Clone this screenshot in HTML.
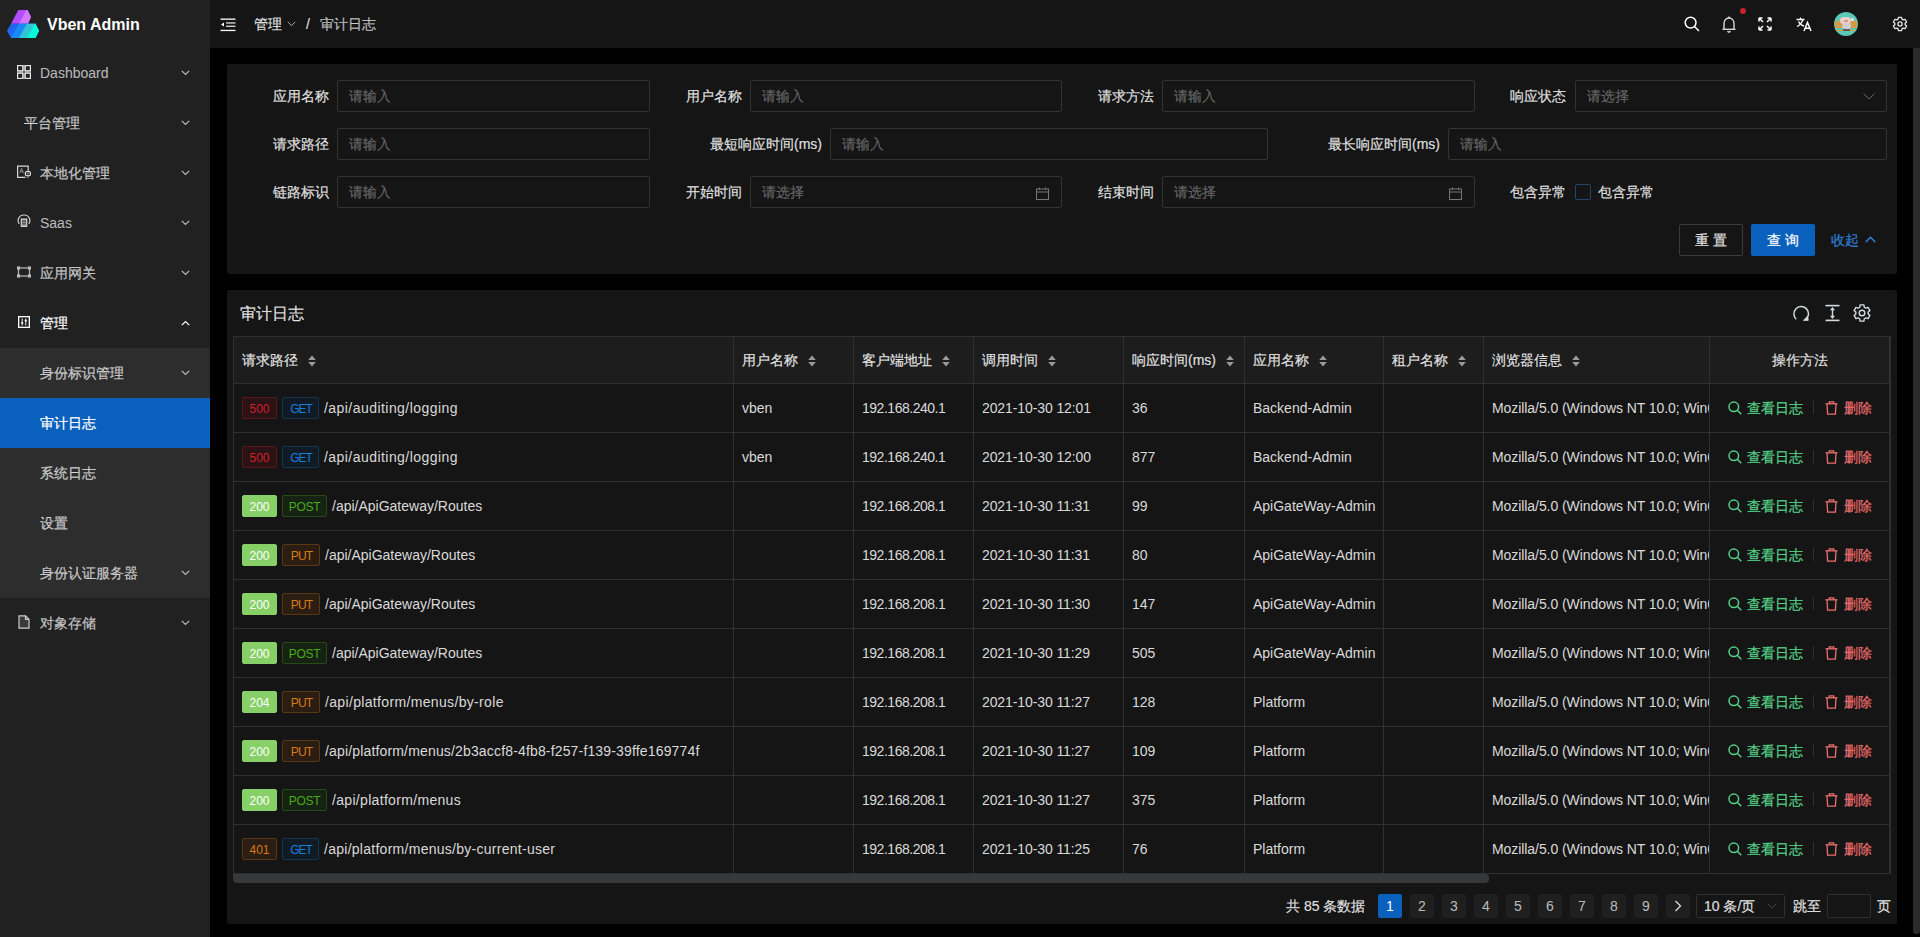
<!DOCTYPE html>
<html><head><meta charset="utf-8">
<style>
*{box-sizing:border-box;margin:0;padding:0}
html,body{width:1920px;height:937px;overflow:hidden;background:#000;font-family:"Liberation Sans",sans-serif;font-size:14px;color:rgba(255,255,255,.85)}
.a{position:absolute}
svg{display:block}
/* sidebar */
#side{left:0;top:0;width:210px;height:937px;background:#212121}
.mi{position:absolute;left:0;width:210px;height:50px;line-height:50px;color:rgba(255,255,255,.7);white-space:nowrap}
.mi .ic{position:absolute;left:17px;top:17px;width:14px;height:14px}
.mi .tx{position:absolute;left:40px;top:0}
.mi .chev{position:absolute;left:181px;top:22px}
#sub{left:0;top:348px;width:210px;height:250px;background:#2d2d2d}
/* header */
#hdr{left:210px;top:0;width:1710px;height:48px;background:#151515}
/* cards */
.card{background:#151515;border-radius:2px}
.lbl{position:absolute;white-space:nowrap;color:rgba(255,255,255,.85);line-height:32px;text-align:right}
.inp{position:absolute;height:32px;border:1px solid #333;border-radius:2px;background:#151515}
.ph{position:absolute;left:11px;top:0;line-height:30px;color:rgba(255,255,255,.3)}
.th{line-height:46px;white-space:nowrap;color:rgba(255,255,255,.85)}
.td{line-height:48px;white-space:nowrap;color:rgba(255,255,255,.85)}
.tag{height:22px;line-height:21px;padding-top:1px;font-size:12px;text-align:center;border:1px solid;border-radius:2px}
.tr{color:#d32029;background:#2a1215;border-color:#58181c}
.tg{color:#fff;background:#87d068;border-color:#87d068}
.to{letter-spacing:-0.8px;text-indent:1px;color:#d87a16;background:#2b1d11;border-color:#593815}
.tb{letter-spacing:-1px;text-indent:1px;color:#177ddc;background:#111b26;border-color:#153450}
.tp{letter-spacing:-0.3px;color:#49aa19;background:#162312;border-color:#274916}
.pg{width:24px;height:24px;line-height:24px;text-align:center;background:#1f1f1f;border-radius:2px;color:rgba(255,255,255,.7)}
.tos{letter-spacing:0;text-indent:0}
body *{-webkit-text-stroke:0.2px}
.nl,.nl *{-webkit-text-stroke:0}
</style></head><body>

<!-- SIDEBAR -->
<div id="side" class="a">
  <svg class="a" style="left:7px;top:9px" width="33" height="30" viewBox="7 9 33 30">
    <defs>
      <linearGradient id="gp" x1="0" y1="0" x2="1" y2="0"></linearGradient>
    </defs>
    <polygon points="18.3,10 27.5,10 31,16.9 28,23.8 11,23.8" fill="#b44cff"/>
    <polygon points="26.3,10 27.5,10 31,16.9 28,23.8 19,23.8" fill="#d577ff"/>
    <polygon points="11,23.8 35.4,23.8 39,30.8 35.4,38 11,38 7,30.8" fill="#2067f0"/>
    <polygon points="19,23.8 35.4,23.8 39,30.8 35.4,38 11,38 15,30.8" fill="#1a8bf5"/>
    <polygon points="27,23.8 35.4,23.8 39,30.8 35.4,38 19,38 23,30.8" fill="#32c4d2"/>
    <polygon points="35,23.8 35.4,23.8 39,30.8 35.4,38 27,38 31,30.8" fill="#00fcd8"/>
  </svg>
  <div class="a" style="left:47px;top:1px;line-height:48px;font-size:16px;font-weight:bold;color:#fff;-webkit-text-stroke:0">Vben Admin</div>

  <div id="sub" class="a"></div>

  <div class="mi" style="top:48px">
    <svg class="ic" viewBox="0 0 14 14" fill="none"><rect x="5.8" y="0" width="2.4" height="14" fill="#8a8a8a"/><rect x="0" y="5.8" width="14" height="2.4" fill="#8a8a8a"/><g stroke="#e6e6e6" stroke-width="1.2"><rect x="0.6" y="0.6" width="5.2" height="5.2"/><rect x="8.2" y="0.6" width="5.2" height="5.2"/><rect x="0.6" y="8.2" width="5.2" height="5.2"/><rect x="8.2" y="8.2" width="5.2" height="5.2"/></g><circle cx="7" cy="7" r="0.7" fill="#222"/></svg>
    <span class="tx nl">Dashboard</span>
    <svg class="chev" width="9" height="6" viewBox="0 0 9 6"><path d="M0.8 0.8 L4.5 4.5 L8.2 0.8" fill="none" stroke="#bbb" stroke-width="1.2"/></svg>
  </div>
  <div class="mi" style="top:98px">
    <span class="tx" style="left:24px">平台管理</span>
    <svg class="chev" width="9" height="6" viewBox="0 0 9 6"><path d="M0.8 0.8 L4.5 4.5 L8.2 0.8" fill="none" stroke="#bbb" stroke-width="1.2"/></svg>
  </div>
  <div class="mi" style="top:148px">
    <svg class="ic" viewBox="0 0 14 14" fill="none" stroke="#d6d6d6" stroke-width="1.2"><path d="M8.5 12.4H0.6V1.2H11.2V6"/><path d="M2.8 8.2L4.6 3.2L6.4 8.2M3.5 6.6H5.7" stroke="#8f8f8f" stroke-width="1"/><rect x="8.4" y="6.6" width="5" height="4" rx="1"/><path d="M10.9 10.6V13" stroke="#999"/><rect x="9.6" y="7.8" width="2.6" height="1.6" fill="#777" stroke="none"/></svg>
    <span class="tx">本地化管理</span>
    <svg class="chev" width="9" height="6" viewBox="0 0 9 6"><path d="M0.8 0.8 L4.5 4.5 L8.2 0.8" fill="none" stroke="#bbb" stroke-width="1.2"/></svg>
  </div>
  <div class="mi" style="top:198px">
    <svg class="ic" style="top:16px;height:13px" viewBox="0 0 14 13" fill="none" stroke="#cfcfcf" stroke-width="1.2"><path d="M2.2 9.8C0.2 7.5 0.8 1 7 1S13.8 7.5 11.8 9.8"/><rect x="4.2" y="5" width="5.6" height="7.4" fill="#9a9a9a" stroke="#e0e0e0" stroke-width="1"/><rect x="5.2" y="6.2" width="1.4" height="1.6" fill="#333" stroke="none"/><rect x="7.4" y="6.2" width="1.4" height="1.6" fill="#333" stroke="none"/><rect x="5.2" y="8.8" width="1.4" height="1.6" fill="#333" stroke="none"/><rect x="7.4" y="8.8" width="1.4" height="1.6" fill="#333" stroke="none"/></svg>
    <span class="tx nl">Saas</span>
    <svg class="chev" width="9" height="6" viewBox="0 0 9 6"><path d="M0.8 0.8 L4.5 4.5 L8.2 0.8" fill="none" stroke="#bbb" stroke-width="1.2"/></svg>
  </div>
  <div class="mi" style="top:248px">
    <svg class="ic" viewBox="0 0 14 14" fill="none" stroke="#bbb" stroke-width="1.2"><rect x="1.5" y="3" width="11" height="8"/><rect x="0.5" y="2" width="2" height="2" fill="#555"/><rect x="11.5" y="2" width="2" height="2" fill="#555"/><rect x="0.5" y="10" width="2" height="2" fill="#555"/><rect x="11.5" y="10" width="2" height="2" fill="#555"/></svg>
    <span class="tx">应用网关</span>
    <svg class="chev" width="9" height="6" viewBox="0 0 9 6"><path d="M0.8 0.8 L4.5 4.5 L8.2 0.8" fill="none" stroke="#bbb" stroke-width="1.2"/></svg>
  </div>
  <div class="mi" style="top:298px;color:#fff">
    <svg class="ic" style="left:18px;top:18px;width:12px;height:12px" viewBox="0 0 12 12" fill="none" stroke="#fff" stroke-width="1.3"><rect x="0.65" y="0.65" width="10.7" height="10.7"/><path d="M4.2 2.5V9.5M7.8 2.5V9.5" stroke-width="0.9"/><path d="M4.2 6L5.2 7L4.2 8L3.2 7Z" fill="#fff" stroke-width="0.6"/><path d="M7.8 3.8L8.8 4.8L7.8 5.8L6.8 4.8Z" fill="#fff" stroke-width="0.6"/></svg>
    <span class="tx">管理</span>
    <svg class="chev" width="9" height="6" viewBox="0 0 9 6"><path d="M0.8 5.2 L4.5 1.5 L8.2 5.2" fill="none" stroke="#fff" stroke-width="1.2"/></svg>
  </div>
  <div class="mi" style="top:348px">
    <span class="tx">身份标识管理</span>
    <svg class="chev" width="9" height="6" viewBox="0 0 9 6"><path d="M0.8 0.8 L4.5 4.5 L8.2 0.8" fill="none" stroke="#bbb" stroke-width="1.2"/></svg>
  </div>
  <div class="mi" style="top:398px;background:#0960bd;color:#fff">
    <span class="tx">审计日志</span>
  </div>
  <div class="mi" style="top:448px"><span class="tx">系统日志</span></div>
  <div class="mi" style="top:498px"><span class="tx">设置</span></div>
  <div class="mi" style="top:548px">
    <span class="tx">身份认证服务器</span>
    <svg class="chev" width="9" height="6" viewBox="0 0 9 6"><path d="M0.8 0.8 L4.5 4.5 L8.2 0.8" fill="none" stroke="#bbb" stroke-width="1.2"/></svg>
  </div>
  <div class="mi" style="top:598px">
    <svg class="ic" viewBox="0 0 14 14" fill="none" stroke="#ccc" stroke-width="1.2"><path d="M2 0.8H8.5L12 4.3V13.2H2Z" fill="#3a3a3a"/><path d="M8.5 0.8V4.3H12" /></svg>
    <span class="tx">对象存储</span>
    <svg class="chev" width="9" height="6" viewBox="0 0 9 6"><path d="M0.8 0.8 L4.5 4.5 L8.2 0.8" fill="none" stroke="#bbb" stroke-width="1.2"/></svg>
  </div>
</div>

<!-- HEADER -->
<div id="hdr" class="a">
  <svg class="a" style="left:10px;top:18px" width="16" height="14" viewBox="0 0 16 14">
    <rect x="0.5" y="0.5" width="15" height="1.3" fill="#fff"/>
    <rect x="6" y="4.3" width="9.5" height="1.3" fill="#ddd"/>
    <rect x="6" y="7.6" width="9.5" height="1.3" fill="#ddd"/>
    <path d="M1 6.5L4 4.5V8.5Z" fill="#fff"/>
    <rect x="0.5" y="11.8" width="15" height="1.3" fill="#fff"/>
  </svg>
  <div class="a" style="left:44px;top:0;line-height:48px;color:rgba(255,255,255,.85)">管理</div>
  <svg class="a" style="left:77px;top:21px" width="9" height="6" viewBox="0 0 9 6"><path d="M0.8 0.8 L4.5 4.8 L8.2 0.8" fill="none" stroke="#aaa" stroke-width="1"/></svg>
  <div class="a" style="left:96px;top:0;line-height:48px;color:rgba(255,255,255,.85)">/</div>
  <div class="a" style="left:110px;top:0;line-height:48px;color:rgba(255,255,255,.65)">审计日志</div>

  <!-- search -->
  <svg class="a" style="left:1474px;top:16px" width="16" height="16" viewBox="0 0 16 16" fill="none" stroke="#fff" stroke-width="1.5"><circle cx="6.6" cy="6.6" r="5.4"/><path d="M10.5 10.5L15 15"/></svg>
  <!-- bell -->
  <svg class="a" style="left:1512px;top:16px" width="14" height="17" viewBox="0 0 14 17" fill="none" stroke="#e6e6e6" stroke-width="1.3"><path d="M2 13V7.5C2 4.5 4 2 7 2S12 4.5 12 7.5V13"/><path d="M0.5 13.3H13.5"/><path d="M7 0.5V2"/><path d="M5.5 15.2Q7 16.8 8.5 15.2"/></svg>
  <div class="a" style="left:1530px;top:8px;width:6px;height:6px;border-radius:3px;background:#c8222a"></div>
  <!-- fullscreen -->
  <svg class="a" style="left:1548px;top:17px" width="14" height="14" viewBox="0 0 14 14" fill="none" stroke="#fff" stroke-width="1.5"><path d="M1 1L5 5M1 1V4.5M1 1H4.5"/><path d="M13 1L9 5M13 1V4.5M13 1H9.5"/><path d="M1 13L5 9M1 13V9.5M1 13H4.5"/><path d="M13 13L9 9M13 13V9.5M13 13H9.5"/></svg>
  <!-- translate -->
  <svg class="a" style="left:1586px;top:17px" width="16" height="15" viewBox="0 0 16 15" fill="none" stroke="#fff" stroke-width="1.3"><path d="M0.5 2.5H8.5M4.5 0.5V2.5M7 2.5Q5 8 1 9.5M2.5 4.5Q4 8 8 9"/><path d="M8 14L11.5 5.5L15 14M9.2 11.3H13.8" stroke-width="1.5"/></svg>
  <!-- avatar -->
  <div class="a" style="left:1624px;top:12px;width:24px;height:24px;border-radius:12px;background:#5ac8b6;overflow:hidden">
    <div class="a" style="left:1px;top:9px;width:22px;height:7px;background:#d49a48"></div>
    <div class="a" style="left:1px;top:18px;width:22px;height:1px;background:#e0a040"></div>
    <div class="a" style="left:6px;top:5px;width:11px;height:7px;border-radius:5px;background:#e9cfc6"></div>
    <div class="a" style="left:10px;top:8px;width:4px;height:2px;border-radius:2px;background:#d98a8a"></div>
    <div class="a" style="left:8px;top:11px;width:9px;height:6px;border-radius:3px;background:#cfcfcf"></div>
    <div class="a" style="left:9px;top:17px;width:7px;height:2px;background:#6a5a4a"></div>
    <div class="a" style="left:17px;top:6px;width:3px;height:3px;border-radius:2px;background:#e8e8e8"></div>
  </div>
  <!-- settings -->
  <svg class="a" style="left:1682px;top:16px" width="16" height="16" viewBox="0 0 16 16" fill="none" stroke="#e6e6e6" stroke-width="1.3" stroke-linejoin="round"><path d="M6.05 3.18L6.45 1.28L9.55 1.28L9.95 3.18L11.20 3.90L13.05 3.29L14.60 5.98L13.15 7.28L13.15 8.72L14.60 10.02L13.05 12.71L11.20 12.10L9.95 12.82L9.55 14.72L6.45 14.72L6.05 12.82L4.80 12.10L2.95 12.71L1.40 10.02L2.85 8.72L2.85 7.28L1.40 5.98L2.95 3.29L4.80 3.90Z"/><circle cx="8" cy="8" r="2.1"/></svg>
</div>

<!-- page scrollbar -->
<div class="a" style="left:1913px;top:48px;width:7px;height:886px;background:#2b2b2b;border-radius:0 0 4px 4px"></div>

<!-- FORM CARD -->
<div id="form" class="a card" style="left:227px;top:64px;width:1670px;height:210px">
<div class="lbl" style="right:1568px;top:16px">应用名称</div>
<div class="inp" style="left:110px;top:16px;width:313px"><span class="ph">请输入</span></div>
<div class="lbl" style="right:1155px;top:16px">用户名称</div>
<div class="inp" style="left:523px;top:16px;width:312px"><span class="ph">请输入</span></div>
<div class="lbl" style="right:743px;top:16px">请求方法</div>
<div class="inp" style="left:935px;top:16px;width:313px"><span class="ph">请输入</span></div>
<div class="lbl" style="right:331px;top:16px">响应状态</div>
<div class="inp" style="left:1348px;top:16px;width:312px"><span class="ph">请选择</span><svg class="a" style="right:11px;top:12px" width="12" height="7" viewBox="0 0 12 7" fill="none" stroke="#666" stroke-width="1"><path d="M0.5 0.5L6 6L11.5 0.5"/></svg></div>
<div class="lbl" style="right:1568px;top:64px">请求路径</div>
<div class="inp" style="left:110px;top:64px;width:313px"><span class="ph">请输入</span></div>
<div class="lbl" style="right:1075px;top:64px">最短响应时间(ms)</div>
<div class="inp" style="left:603px;top:64px;width:438px"><span class="ph">请输入</span></div>
<div class="lbl" style="right:457px;top:64px">最长响应时间(ms)</div>
<div class="inp" style="left:1221px;top:64px;width:439px"><span class="ph">请输入</span></div>
<div class="lbl" style="right:1568px;top:112px">链路标识</div>
<div class="inp" style="left:110px;top:112px;width:313px"><span class="ph">请输入</span></div>
<div class="lbl" style="right:1155px;top:112px">开始时间</div>
<div class="inp" style="left:523px;top:112px;width:312px"><span class="ph">请选择</span><svg class="a" style="right:12px;top:10px" width="13" height="13" viewBox="0 0 13 13" fill="none" stroke="#777" stroke-width="1"><rect x="0.5" y="2" width="12" height="10.5"/><path d="M0.5 5H12.5M3.5 0.5V3M9.5 0.5V3"/></svg></div>
<div class="lbl" style="right:743px;top:112px">结束时间</div>
<div class="inp" style="left:935px;top:112px;width:313px"><span class="ph">请选择</span><svg class="a" style="right:12px;top:10px" width="13" height="13" viewBox="0 0 13 13" fill="none" stroke="#777" stroke-width="1"><rect x="0.5" y="2" width="12" height="10.5"/><path d="M0.5 5H12.5M3.5 0.5V3M9.5 0.5V3"/></svg></div>
<div class="lbl" style="right:331px;top:112px">包含异常</div>
<div class="a" style="left:1348px;top:120px;width:16px;height:16px;border:1px solid #24456b;border-radius:2px"></div>
<div class="a" style="left:1371px;top:112px;line-height:32px;white-space:nowrap">包含异常</div>
<div class="a" style="left:1452px;top:160px;width:64px;height:32px;border:1px solid #3a3a3a;border-radius:2px;text-align:center;line-height:30px;letter-spacing:4px;text-indent:4px">重置</div>
<div class="a" style="left:1524px;top:160px;width:64px;height:32px;background:#0960bd;border-radius:2px;text-align:center;line-height:32px;color:#fff;letter-spacing:4px;text-indent:4px">查询</div>
<div class="a" style="left:1604px;top:160px;line-height:32px;color:#0960bd;white-space:nowrap;color:#2f80d8">收起</div>
<svg class="a" style="left:1638px;top:172px" width="11" height="7" viewBox="0 0 11 7" fill="none" stroke="#2f80d8" stroke-width="1.5"><path d="M0.8 6L5.5 1.2L10.2 6"/></svg>
</div>

<!-- TABLE CARD -->
<div id="tbl" class="a card" style="left:227px;top:290px;width:1670px;height:634px">
<div class="a" style="left:13px;top:12px;line-height:24px;font-size:16px;color:rgba(255,255,255,.85);white-space:nowrap">审计日志</div>
<svg class="a" style="left:1565px;top:14px" width="18" height="18" viewBox="0 0 18 18" fill="none" stroke="#d6d9de" stroke-width="1.5"><path d="M4.2 15.2A7.3 7.3 0 1 1 14.8 14.6"/><path d="M11.3 16.3H16.2L15.4 11.8" fill="#d6d9de" stroke-width="1"/></svg>
<svg class="a" style="left:1598px;top:14px" width="15" height="18" viewBox="0 0 15 18" fill="#d6d9de"><rect x="0.5" y="0.8" width="14" height="1.6"/><rect x="0.5" y="15.6" width="14" height="1.6"/><rect x="6.8" y="4.5" width="1.4" height="9"/><path d="M7.5 3L10 6.3H5Z"/><path d="M7.5 15L10 11.7H5Z"/></svg>
<svg class="a" style="left:1626px;top:13px" width="18" height="20" viewBox="0 0 18 20" fill="none" stroke="#d6d9de" stroke-width="1.4" stroke-linejoin="round"><path d="M6.68 4.25L7.13 1.91L10.87 1.91L11.32 4.25L12.82 5.11L15.07 4.34L16.94 7.57L15.14 9.14L15.14 10.86L16.94 12.43L15.07 15.66L12.82 14.89L11.32 15.75L10.87 18.09L7.13 18.09L6.68 15.75L5.18 14.89L2.93 15.66L1.06 12.43L2.86 10.86L2.86 9.14L1.06 7.57L2.93 4.34L5.18 5.11Z"/><circle cx="9" cy="10" r="2.8"/></svg>
<div class="a" style="left:6px;top:46px;width:1658px;height:538px;border-top:1px solid #303030;border-left:1px solid #303030;border-right:2px solid #303030"></div>
<div class="a" style="left:7px;top:47px;width:1655px;height:46px;background:#1d1d1d"></div>
<div class="a" style="left:7px;top:93px;width:1655px;height:1px;background:#303030"></div>
<div class="a" style="left:7px;top:142px;width:1655px;height:1px;background:#303030"></div>
<div class="a" style="left:7px;top:191px;width:1655px;height:1px;background:#303030"></div>
<div class="a" style="left:7px;top:240px;width:1655px;height:1px;background:#303030"></div>
<div class="a" style="left:7px;top:289px;width:1655px;height:1px;background:#303030"></div>
<div class="a" style="left:7px;top:338px;width:1655px;height:1px;background:#303030"></div>
<div class="a" style="left:7px;top:387px;width:1655px;height:1px;background:#303030"></div>
<div class="a" style="left:7px;top:436px;width:1655px;height:1px;background:#303030"></div>
<div class="a" style="left:7px;top:485px;width:1655px;height:1px;background:#303030"></div>
<div class="a" style="left:7px;top:534px;width:1655px;height:1px;background:#303030"></div>
<div class="a" style="left:7px;top:583px;width:1655px;height:1px;background:#303030"></div>
<div class="a" style="left:506px;top:47px;width:1px;height:536px;background:#303030"></div>
<div class="a" style="left:626px;top:47px;width:1px;height:536px;background:#303030"></div>
<div class="a" style="left:746px;top:47px;width:1px;height:536px;background:#303030"></div>
<div class="a" style="left:896px;top:47px;width:1px;height:536px;background:#303030"></div>
<div class="a" style="left:1017px;top:47px;width:1px;height:536px;background:#303030"></div>
<div class="a" style="left:1156px;top:47px;width:1px;height:536px;background:#303030"></div>
<div class="a" style="left:1256px;top:47px;width:1px;height:536px;background:#303030"></div>
<div class="a" style="left:1482px;top:47px;width:1px;height:536px;background:#303030"></div>
<div class="a" style="left:6px;top:584px;width:1256px;height:9px;background:#37383a;border-radius:0 4px 4px 4px"></div>
<div class="a th" style="left:15px;top:47px">请求路径</div>
<svg class="a" style="left:81px;top:65px" width="8" height="12" viewBox="0 0 8 12" fill="#9a9a9a"><path d="M4 0.5L7.8 5H0.2Z"/><path d="M4 11.5L7.8 7H0.2Z"/></svg>
<div class="a th" style="left:515px;top:47px">用户名称</div>
<svg class="a" style="left:581px;top:65px" width="8" height="12" viewBox="0 0 8 12" fill="#9a9a9a"><path d="M4 0.5L7.8 5H0.2Z"/><path d="M4 11.5L7.8 7H0.2Z"/></svg>
<div class="a th" style="left:635px;top:47px">客户端地址</div>
<svg class="a" style="left:715px;top:65px" width="8" height="12" viewBox="0 0 8 12" fill="#9a9a9a"><path d="M4 0.5L7.8 5H0.2Z"/><path d="M4 11.5L7.8 7H0.2Z"/></svg>
<div class="a th" style="left:755px;top:47px">调用时间</div>
<svg class="a" style="left:821px;top:65px" width="8" height="12" viewBox="0 0 8 12" fill="#9a9a9a"><path d="M4 0.5L7.8 5H0.2Z"/><path d="M4 11.5L7.8 7H0.2Z"/></svg>
<div class="a th" style="left:905px;top:47px">响应时间(ms)</div>
<svg class="a" style="left:999px;top:65px" width="8" height="12" viewBox="0 0 8 12" fill="#9a9a9a"><path d="M4 0.5L7.8 5H0.2Z"/><path d="M4 11.5L7.8 7H0.2Z"/></svg>
<div class="a th" style="left:1026px;top:47px">应用名称</div>
<svg class="a" style="left:1092px;top:65px" width="8" height="12" viewBox="0 0 8 12" fill="#9a9a9a"><path d="M4 0.5L7.8 5H0.2Z"/><path d="M4 11.5L7.8 7H0.2Z"/></svg>
<div class="a th" style="left:1165px;top:47px">租户名称</div>
<svg class="a" style="left:1231px;top:65px" width="8" height="12" viewBox="0 0 8 12" fill="#9a9a9a"><path d="M4 0.5L7.8 5H0.2Z"/><path d="M4 11.5L7.8 7H0.2Z"/></svg>
<div class="a th" style="left:1265px;top:47px">浏览器信息</div>
<svg class="a" style="left:1345px;top:65px" width="8" height="12" viewBox="0 0 8 12" fill="#9a9a9a"><path d="M4 0.5L7.8 5H0.2Z"/><path d="M4 11.5L7.8 7H0.2Z"/></svg>
<div class="a th" style="left:1483px;top:47px;width:180px;text-align:center">操作方法</div>
<div class="a nl tag tr" style="left:15px;top:107px;width:35px">500</div>
<div class="a nl tag tb" style="left:55px;top:107px;width:37px">GET</div>
<div class="a td nl" style="left:97px;top:94px;letter-spacing:0.45px">/api/auditing/logging</div>
<div class="a td nl" style="left:515px;top:94px">vben</div>
<div class="a td nl" style="left:635px;top:94px;letter-spacing:-0.48px">192.168.240.1</div>
<div class="a td nl" style="left:755px;top:94px;letter-spacing:-0.1px">2021-10-30 12:01</div>
<div class="a td nl" style="left:905px;top:94px">36</div>
<div class="a td nl" style="left:1026px;top:94px">Backend-Admin</div>
<div class="a td nl" style="left:1265px;top:94px;width:217px;overflow:hidden;letter-spacing:-0.07px">Mozilla/5.0 (Windows NT 10.0; Win64; x64)</div>
<svg class="a" style="left:1501px;top:111px" width="14" height="14" viewBox="0 0 14 14" fill="none" stroke="#55d187" stroke-width="1.5"><circle cx="5.8" cy="5.8" r="4.8"/><path d="M9.3 9.3L13.3 13.3"/></svg>
<div class="a td" style="left:1520px;top:94px;color:#55d187">查看日志</div>
<div class="a" style="left:1586px;top:111px;width:1px;height:13px;background:#303030"></div>
<svg class="a" style="left:1598px;top:111px" width="13" height="14" viewBox="0 0 13 14" fill="none" stroke="#ed6f6f" stroke-width="1.3"><path d="M0.5 2.8H12.5"/><path d="M4.3 2.8V0.9H8.7V2.8"/><path d="M2 2.8L2.6 13.2H10.4L11 2.8"/></svg>
<div class="a td" style="left:1617px;top:94px;color:#ed6f6f">删除</div>
<div class="a nl tag tr" style="left:15px;top:156px;width:35px">500</div>
<div class="a nl tag tb" style="left:55px;top:156px;width:37px">GET</div>
<div class="a td nl" style="left:97px;top:143px;letter-spacing:0.45px">/api/auditing/logging</div>
<div class="a td nl" style="left:515px;top:143px">vben</div>
<div class="a td nl" style="left:635px;top:143px;letter-spacing:-0.48px">192.168.240.1</div>
<div class="a td nl" style="left:755px;top:143px;letter-spacing:-0.1px">2021-10-30 12:00</div>
<div class="a td nl" style="left:905px;top:143px">877</div>
<div class="a td nl" style="left:1026px;top:143px">Backend-Admin</div>
<div class="a td nl" style="left:1265px;top:143px;width:217px;overflow:hidden;letter-spacing:-0.07px">Mozilla/5.0 (Windows NT 10.0; Win64; x64)</div>
<svg class="a" style="left:1501px;top:160px" width="14" height="14" viewBox="0 0 14 14" fill="none" stroke="#55d187" stroke-width="1.5"><circle cx="5.8" cy="5.8" r="4.8"/><path d="M9.3 9.3L13.3 13.3"/></svg>
<div class="a td" style="left:1520px;top:143px;color:#55d187">查看日志</div>
<div class="a" style="left:1586px;top:160px;width:1px;height:13px;background:#303030"></div>
<svg class="a" style="left:1598px;top:160px" width="13" height="14" viewBox="0 0 13 14" fill="none" stroke="#ed6f6f" stroke-width="1.3"><path d="M0.5 2.8H12.5"/><path d="M4.3 2.8V0.9H8.7V2.8"/><path d="M2 2.8L2.6 13.2H10.4L11 2.8"/></svg>
<div class="a td" style="left:1617px;top:143px;color:#ed6f6f">删除</div>
<div class="a nl tag tg" style="left:15px;top:205px;width:35px">200</div>
<div class="a nl tag tp" style="left:55px;top:205px;width:45px">POST</div>
<div class="a td nl" style="left:105px;top:192px">/api/ApiGateway/Routes</div>
<div class="a td nl" style="left:635px;top:192px;letter-spacing:-0.48px">192.168.208.1</div>
<div class="a td nl" style="left:755px;top:192px;letter-spacing:-0.1px">2021-10-30 11:31</div>
<div class="a td nl" style="left:905px;top:192px">99</div>
<div class="a td nl" style="left:1026px;top:192px">ApiGateWay-Admin</div>
<div class="a td nl" style="left:1265px;top:192px;width:217px;overflow:hidden;letter-spacing:-0.07px">Mozilla/5.0 (Windows NT 10.0; Win64; x64)</div>
<svg class="a" style="left:1501px;top:209px" width="14" height="14" viewBox="0 0 14 14" fill="none" stroke="#55d187" stroke-width="1.5"><circle cx="5.8" cy="5.8" r="4.8"/><path d="M9.3 9.3L13.3 13.3"/></svg>
<div class="a td" style="left:1520px;top:192px;color:#55d187">查看日志</div>
<div class="a" style="left:1586px;top:209px;width:1px;height:13px;background:#303030"></div>
<svg class="a" style="left:1598px;top:209px" width="13" height="14" viewBox="0 0 13 14" fill="none" stroke="#ed6f6f" stroke-width="1.3"><path d="M0.5 2.8H12.5"/><path d="M4.3 2.8V0.9H8.7V2.8"/><path d="M2 2.8L2.6 13.2H10.4L11 2.8"/></svg>
<div class="a td" style="left:1617px;top:192px;color:#ed6f6f">删除</div>
<div class="a nl tag tg" style="left:15px;top:254px;width:35px">200</div>
<div class="a nl tag to" style="left:55px;top:254px;width:38px">PUT</div>
<div class="a td nl" style="left:98px;top:241px">/api/ApiGateway/Routes</div>
<div class="a td nl" style="left:635px;top:241px;letter-spacing:-0.48px">192.168.208.1</div>
<div class="a td nl" style="left:755px;top:241px;letter-spacing:-0.1px">2021-10-30 11:31</div>
<div class="a td nl" style="left:905px;top:241px">80</div>
<div class="a td nl" style="left:1026px;top:241px">ApiGateWay-Admin</div>
<div class="a td nl" style="left:1265px;top:241px;width:217px;overflow:hidden;letter-spacing:-0.07px">Mozilla/5.0 (Windows NT 10.0; Win64; x64)</div>
<svg class="a" style="left:1501px;top:258px" width="14" height="14" viewBox="0 0 14 14" fill="none" stroke="#55d187" stroke-width="1.5"><circle cx="5.8" cy="5.8" r="4.8"/><path d="M9.3 9.3L13.3 13.3"/></svg>
<div class="a td" style="left:1520px;top:241px;color:#55d187">查看日志</div>
<div class="a" style="left:1586px;top:258px;width:1px;height:13px;background:#303030"></div>
<svg class="a" style="left:1598px;top:258px" width="13" height="14" viewBox="0 0 13 14" fill="none" stroke="#ed6f6f" stroke-width="1.3"><path d="M0.5 2.8H12.5"/><path d="M4.3 2.8V0.9H8.7V2.8"/><path d="M2 2.8L2.6 13.2H10.4L11 2.8"/></svg>
<div class="a td" style="left:1617px;top:241px;color:#ed6f6f">删除</div>
<div class="a nl tag tg" style="left:15px;top:303px;width:35px">200</div>
<div class="a nl tag to" style="left:55px;top:303px;width:38px">PUT</div>
<div class="a td nl" style="left:98px;top:290px">/api/ApiGateway/Routes</div>
<div class="a td nl" style="left:635px;top:290px;letter-spacing:-0.48px">192.168.208.1</div>
<div class="a td nl" style="left:755px;top:290px;letter-spacing:-0.1px">2021-10-30 11:30</div>
<div class="a td nl" style="left:905px;top:290px">147</div>
<div class="a td nl" style="left:1026px;top:290px">ApiGateWay-Admin</div>
<div class="a td nl" style="left:1265px;top:290px;width:217px;overflow:hidden;letter-spacing:-0.07px">Mozilla/5.0 (Windows NT 10.0; Win64; x64)</div>
<svg class="a" style="left:1501px;top:307px" width="14" height="14" viewBox="0 0 14 14" fill="none" stroke="#55d187" stroke-width="1.5"><circle cx="5.8" cy="5.8" r="4.8"/><path d="M9.3 9.3L13.3 13.3"/></svg>
<div class="a td" style="left:1520px;top:290px;color:#55d187">查看日志</div>
<div class="a" style="left:1586px;top:307px;width:1px;height:13px;background:#303030"></div>
<svg class="a" style="left:1598px;top:307px" width="13" height="14" viewBox="0 0 13 14" fill="none" stroke="#ed6f6f" stroke-width="1.3"><path d="M0.5 2.8H12.5"/><path d="M4.3 2.8V0.9H8.7V2.8"/><path d="M2 2.8L2.6 13.2H10.4L11 2.8"/></svg>
<div class="a td" style="left:1617px;top:290px;color:#ed6f6f">删除</div>
<div class="a nl tag tg" style="left:15px;top:352px;width:35px">200</div>
<div class="a nl tag tp" style="left:55px;top:352px;width:45px">POST</div>
<div class="a td nl" style="left:105px;top:339px">/api/ApiGateway/Routes</div>
<div class="a td nl" style="left:635px;top:339px;letter-spacing:-0.48px">192.168.208.1</div>
<div class="a td nl" style="left:755px;top:339px;letter-spacing:-0.1px">2021-10-30 11:29</div>
<div class="a td nl" style="left:905px;top:339px">505</div>
<div class="a td nl" style="left:1026px;top:339px">ApiGateWay-Admin</div>
<div class="a td nl" style="left:1265px;top:339px;width:217px;overflow:hidden;letter-spacing:-0.07px">Mozilla/5.0 (Windows NT 10.0; Win64; x64)</div>
<svg class="a" style="left:1501px;top:356px" width="14" height="14" viewBox="0 0 14 14" fill="none" stroke="#55d187" stroke-width="1.5"><circle cx="5.8" cy="5.8" r="4.8"/><path d="M9.3 9.3L13.3 13.3"/></svg>
<div class="a td" style="left:1520px;top:339px;color:#55d187">查看日志</div>
<div class="a" style="left:1586px;top:356px;width:1px;height:13px;background:#303030"></div>
<svg class="a" style="left:1598px;top:356px" width="13" height="14" viewBox="0 0 13 14" fill="none" stroke="#ed6f6f" stroke-width="1.3"><path d="M0.5 2.8H12.5"/><path d="M4.3 2.8V0.9H8.7V2.8"/><path d="M2 2.8L2.6 13.2H10.4L11 2.8"/></svg>
<div class="a td" style="left:1617px;top:339px;color:#ed6f6f">删除</div>
<div class="a nl tag tg" style="left:15px;top:401px;width:35px">204</div>
<div class="a nl tag to" style="left:55px;top:401px;width:38px">PUT</div>
<div class="a td nl" style="left:98px;top:388px;letter-spacing:0.34px">/api/platform/menus/by-role</div>
<div class="a td nl" style="left:635px;top:388px;letter-spacing:-0.48px">192.168.208.1</div>
<div class="a td nl" style="left:755px;top:388px;letter-spacing:-0.1px">2021-10-30 11:27</div>
<div class="a td nl" style="left:905px;top:388px">128</div>
<div class="a td nl" style="left:1026px;top:388px">Platform</div>
<div class="a td nl" style="left:1265px;top:388px;width:217px;overflow:hidden;letter-spacing:-0.07px">Mozilla/5.0 (Windows NT 10.0; Win64; x64)</div>
<svg class="a" style="left:1501px;top:405px" width="14" height="14" viewBox="0 0 14 14" fill="none" stroke="#55d187" stroke-width="1.5"><circle cx="5.8" cy="5.8" r="4.8"/><path d="M9.3 9.3L13.3 13.3"/></svg>
<div class="a td" style="left:1520px;top:388px;color:#55d187">查看日志</div>
<div class="a" style="left:1586px;top:405px;width:1px;height:13px;background:#303030"></div>
<svg class="a" style="left:1598px;top:405px" width="13" height="14" viewBox="0 0 13 14" fill="none" stroke="#ed6f6f" stroke-width="1.3"><path d="M0.5 2.8H12.5"/><path d="M4.3 2.8V0.9H8.7V2.8"/><path d="M2 2.8L2.6 13.2H10.4L11 2.8"/></svg>
<div class="a td" style="left:1617px;top:388px;color:#ed6f6f">删除</div>
<div class="a nl tag tg" style="left:15px;top:450px;width:35px">200</div>
<div class="a nl tag to" style="left:55px;top:450px;width:38px">PUT</div>
<div class="a td nl" style="left:98px;top:437px;letter-spacing:0.16px">/api/platform/menus/2b3accf8-4fb8-f257-f139-39ffe169774f</div>
<div class="a td nl" style="left:635px;top:437px;letter-spacing:-0.48px">192.168.208.1</div>
<div class="a td nl" style="left:755px;top:437px;letter-spacing:-0.1px">2021-10-30 11:27</div>
<div class="a td nl" style="left:905px;top:437px">109</div>
<div class="a td nl" style="left:1026px;top:437px">Platform</div>
<div class="a td nl" style="left:1265px;top:437px;width:217px;overflow:hidden;letter-spacing:-0.07px">Mozilla/5.0 (Windows NT 10.0; Win64; x64)</div>
<svg class="a" style="left:1501px;top:454px" width="14" height="14" viewBox="0 0 14 14" fill="none" stroke="#55d187" stroke-width="1.5"><circle cx="5.8" cy="5.8" r="4.8"/><path d="M9.3 9.3L13.3 13.3"/></svg>
<div class="a td" style="left:1520px;top:437px;color:#55d187">查看日志</div>
<div class="a" style="left:1586px;top:454px;width:1px;height:13px;background:#303030"></div>
<svg class="a" style="left:1598px;top:454px" width="13" height="14" viewBox="0 0 13 14" fill="none" stroke="#ed6f6f" stroke-width="1.3"><path d="M0.5 2.8H12.5"/><path d="M4.3 2.8V0.9H8.7V2.8"/><path d="M2 2.8L2.6 13.2H10.4L11 2.8"/></svg>
<div class="a td" style="left:1617px;top:437px;color:#ed6f6f">删除</div>
<div class="a nl tag tg" style="left:15px;top:499px;width:35px">200</div>
<div class="a nl tag tp" style="left:55px;top:499px;width:45px">POST</div>
<div class="a td nl" style="left:105px;top:486px;letter-spacing:0.32px">/api/platform/menus</div>
<div class="a td nl" style="left:635px;top:486px;letter-spacing:-0.48px">192.168.208.1</div>
<div class="a td nl" style="left:755px;top:486px;letter-spacing:-0.1px">2021-10-30 11:27</div>
<div class="a td nl" style="left:905px;top:486px">375</div>
<div class="a td nl" style="left:1026px;top:486px">Platform</div>
<div class="a td nl" style="left:1265px;top:486px;width:217px;overflow:hidden;letter-spacing:-0.07px">Mozilla/5.0 (Windows NT 10.0; Win64; x64)</div>
<svg class="a" style="left:1501px;top:503px" width="14" height="14" viewBox="0 0 14 14" fill="none" stroke="#55d187" stroke-width="1.5"><circle cx="5.8" cy="5.8" r="4.8"/><path d="M9.3 9.3L13.3 13.3"/></svg>
<div class="a td" style="left:1520px;top:486px;color:#55d187">查看日志</div>
<div class="a" style="left:1586px;top:503px;width:1px;height:13px;background:#303030"></div>
<svg class="a" style="left:1598px;top:503px" width="13" height="14" viewBox="0 0 13 14" fill="none" stroke="#ed6f6f" stroke-width="1.3"><path d="M0.5 2.8H12.5"/><path d="M4.3 2.8V0.9H8.7V2.8"/><path d="M2 2.8L2.6 13.2H10.4L11 2.8"/></svg>
<div class="a td" style="left:1617px;top:486px;color:#ed6f6f">删除</div>
<div class="a nl tag to tos" style="left:15px;top:548px;width:35px">401</div>
<div class="a nl tag tb" style="left:55px;top:548px;width:37px">GET</div>
<div class="a td nl" style="left:97px;top:535px;letter-spacing:0.27px">/api/platform/menus/by-current-user</div>
<div class="a td nl" style="left:635px;top:535px;letter-spacing:-0.48px">192.168.208.1</div>
<div class="a td nl" style="left:755px;top:535px;letter-spacing:-0.1px">2021-10-30 11:25</div>
<div class="a td nl" style="left:905px;top:535px">76</div>
<div class="a td nl" style="left:1026px;top:535px">Platform</div>
<div class="a td nl" style="left:1265px;top:535px;width:217px;overflow:hidden;letter-spacing:-0.07px">Mozilla/5.0 (Windows NT 10.0; Win64; x64)</div>
<svg class="a" style="left:1501px;top:552px" width="14" height="14" viewBox="0 0 14 14" fill="none" stroke="#55d187" stroke-width="1.5"><circle cx="5.8" cy="5.8" r="4.8"/><path d="M9.3 9.3L13.3 13.3"/></svg>
<div class="a td" style="left:1520px;top:535px;color:#55d187">查看日志</div>
<div class="a" style="left:1586px;top:552px;width:1px;height:13px;background:#303030"></div>
<svg class="a" style="left:1598px;top:552px" width="13" height="14" viewBox="0 0 13 14" fill="none" stroke="#ed6f6f" stroke-width="1.3"><path d="M0.5 2.8H12.5"/><path d="M4.3 2.8V0.9H8.7V2.8"/><path d="M2 2.8L2.6 13.2H10.4L11 2.8"/></svg>
<div class="a td" style="left:1617px;top:535px;color:#ed6f6f">删除</div>
<div class="a" style="left:1059px;top:604px;line-height:24px;white-space:nowrap">共 85 条数据</div>
<div class="a pg nl" style="left:1151px;top:604px;background:#0960bd;color:#fff">1</div>
<div class="a pg nl" style="left:1183px;top:604px">2</div>
<div class="a pg nl" style="left:1215px;top:604px">3</div>
<div class="a pg nl" style="left:1247px;top:604px">4</div>
<div class="a pg nl" style="left:1279px;top:604px">5</div>
<div class="a pg nl" style="left:1311px;top:604px">6</div>
<div class="a pg nl" style="left:1343px;top:604px">7</div>
<div class="a pg nl" style="left:1375px;top:604px">8</div>
<div class="a pg nl" style="left:1407px;top:604px">9</div>
<div class="a pg nl" style="left:1439px;top:604px"><svg style="margin:6px auto 0" width="8" height="12" viewBox="0 0 8 12" fill="none" stroke="#ddd" stroke-width="1.3"><path d="M1.5 1L6.5 6L1.5 11"/></svg></div>
<div class="a" style="left:1469px;top:604px;width:89px;height:24px;border:1px solid #303030;border-radius:2px"><span class="a" style="left:7px;top:0;line-height:22px;white-space:nowrap">10 条/页</span><svg class="a" style="left:70px;top:8px" width="10" height="6" viewBox="0 0 10 6" fill="none" stroke="#444" stroke-width="1"><path d="M0.5 0.5L5 5L9.5 0.5"/></svg></div>
<div class="a" style="left:1566px;top:604px;line-height:24px;white-space:nowrap">跳至</div>
<div class="a" style="left:1600px;top:604px;width:44px;height:24px;border:1px solid #303030;border-radius:2px"></div>
<div class="a" style="left:1650px;top:604px;line-height:24px;white-space:nowrap">页</div>
</div>

</body></html>
